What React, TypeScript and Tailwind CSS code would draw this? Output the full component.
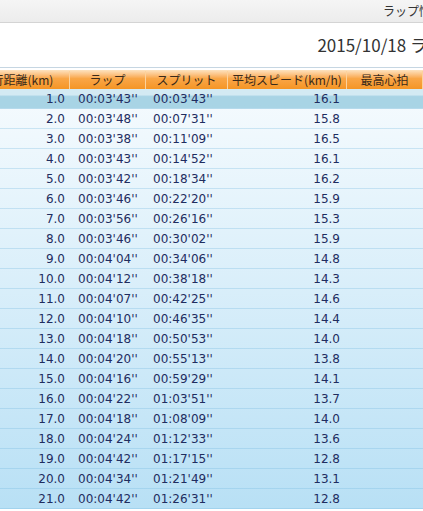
const laps = [
  ['1.0', "00:03'43''", "00:03'43''", '16.1'],
  ['2.0', "00:03'48''", "00:07'31''", '15.8'],
  ['3.0', "00:03'38''", "00:11'09''", '16.5'],
  ['4.0', "00:03'43''", "00:14'52''", '16.1'],
  ['5.0', "00:03'42''", "00:18'34''", '16.2'],
  ['6.0', "00:03'46''", "00:22'20''", '15.9'],
  ['7.0', "00:03'56''", "00:26'16''", '15.3'],
  ['8.0', "00:03'46''", "00:30'02''", '15.9'],
  ['9.0', "00:04'04''", "00:34'06''", '14.8'],
  ['10.0', "00:04'12''", "00:38'18''", '14.3'],
  ['11.0', "00:04'07''", "00:42'25''", '14.6'],
  ['12.0', "00:04'10''", "00:46'35''", '14.4'],
  ['13.0', "00:04'18''", "00:50'53''", '14.0'],
  ['14.0', "00:04'20''", "00:55'13''", '13.8'],
  ['15.0', "00:04'16''", "00:59'29''", '14.1'],
  ['16.0', "00:04'22''", "01:03'51''", '13.7'],
  ['17.0', "00:04'18''", "01:08'09''", '14.0'],
  ['18.0', "00:04'24''", "01:12'33''", '13.6'],
  ['19.0', "00:04'42''", "01:17'15''", '12.8'],
  ['20.0', "00:04'34''", "01:21'49''", '13.1'],
  ['21.0', "00:04'42''", "01:26'31''", '12.8'],
]

const jp = "font-['Noto_Sans_CJK_JP','Noto_Sans',sans-serif]"

function Row({ lap, selected }: { lap: string[]; selected: boolean }) {
  return (
    <div
      className={`flex h-[20px] items-center border-b border-[#6fb6dd]/30 text-[12px] text-[#1f2d5f] ${
        selected ? 'bg-gradient-to-b from-[#d3eaf3] from-30% to-[#a8d4e5] to-40%' : ''
      }`}
    >
      <div className="w-[106px] shrink-0 pr-[5px] text-right">{lap[0]}</div>
      <div className="w-[76px] shrink-0 pl-[8px]">{lap[1]}</div>
      <div className="w-[82px] shrink-0 pl-[7px]">{lap[2]}</div>
      <div className="w-[119px] shrink-0 pr-[7px] text-right">{lap[3]}</div>
      <div className="w-[90px] shrink-0" />
    </div>
  )
}

export default function App() {
  return (
    <div className="h-[511px] w-[423px] overflow-hidden bg-white font-['DejaVu_Sans',Verdana,sans-serif]">
      <div className={`flex h-[23px] items-center justify-end overflow-hidden border-b border-[#d4d4d4] bg-gradient-to-b from-[#f5f5f5] to-[#ececec] ${jp}`}>
        <span className="mr-[-20px] whitespace-nowrap text-[12px] text-[#333]">ラップ情報</span>
      </div>
      <div className={`flex h-[44px] items-center justify-end overflow-hidden ${jp}`}>
        <span className="mr-[-38px] whitespace-nowrap text-[17px] text-[#333]">2015/10/18 ラップ</span>
      </div>
      <div className="border-t border-[#c6d6e2] pt-[2px]">
        <div className="ml-[-36px] w-[480px]">
          <div className={`flex h-[19px] items-center bg-gradient-to-b from-[#fde3bf] via-[#f9a646] via-45% to-[#f59524] text-[12px] text-[#3a2a1a] ${jp}`}>
            <div className="w-[106px] shrink-0 border-r border-[#fcd29c] text-center">走行距離(km)</div>
            <div className="w-[76px] shrink-0 border-r border-[#fcd29c] text-center">ラップ</div>
            <div className="w-[82px] shrink-0 border-r border-[#fcd29c] text-center">スプリット</div>
            <div className="w-[119px] shrink-0 border-r border-[#fcd29c] text-center">平均スピード(km/h)</div>
            <div className="w-[76px] shrink-0 border-r border-[#fcd29c] text-center">最高心拍</div>
          </div>
          <div className="bg-gradient-to-b from-[#f6fbfe] to-[#b8e0f5]">
            {laps.map((lap, i) => (
              <Row key={lap[0]} lap={lap} selected={i === 0} />
            ))}
          </div>
        </div>
      </div>
    </div>
  )
}
